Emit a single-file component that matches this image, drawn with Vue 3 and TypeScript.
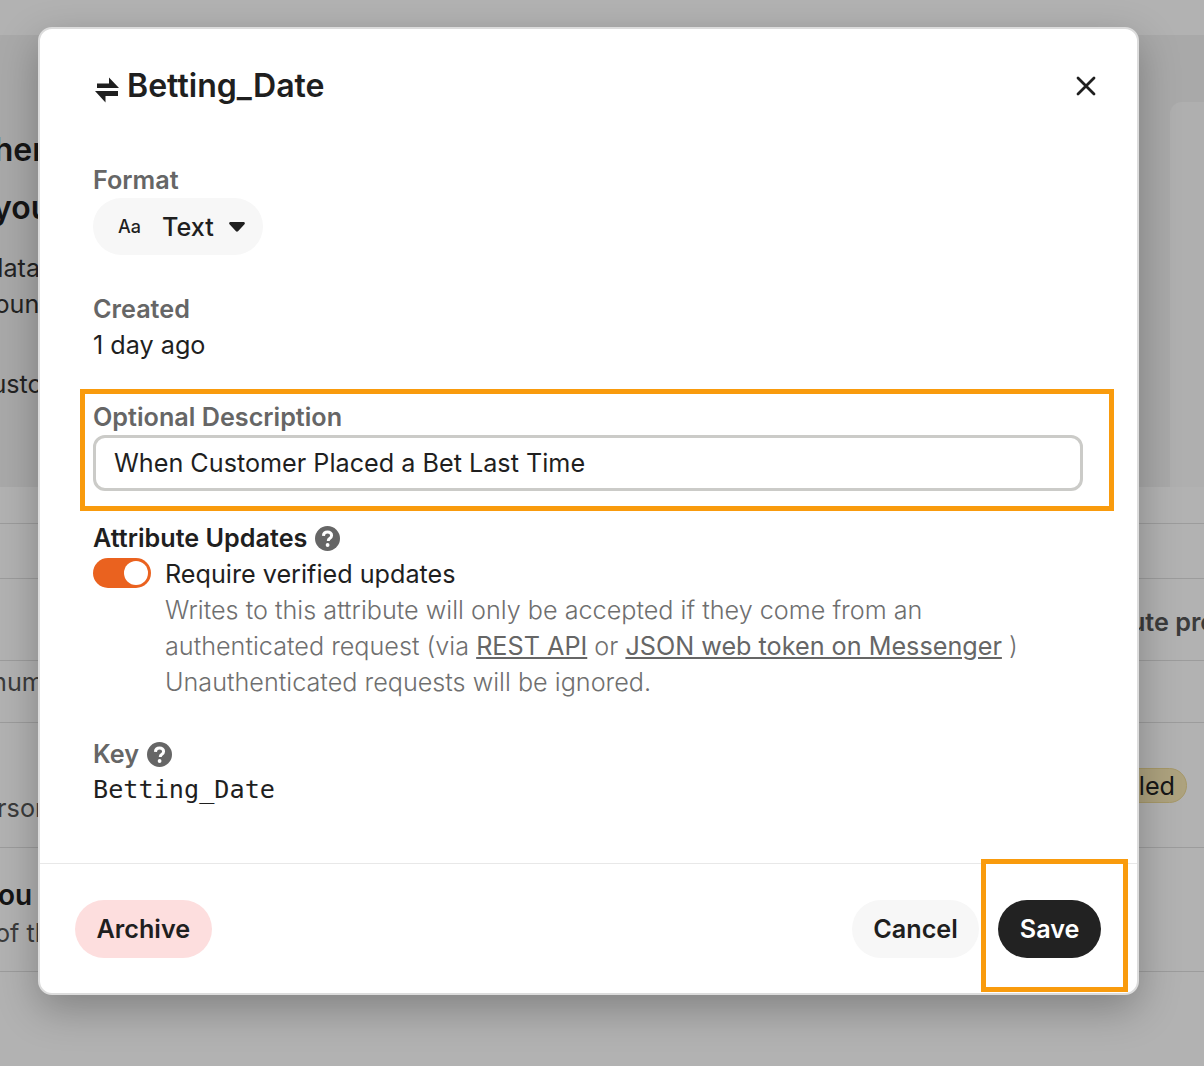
<script setup lang="ts">
const description = 'When Customer Placed a Bet Last Time'
</script>

<template>
  <div class="page">
    <div class="top-band"></div>
    <section class="hero">
      <div class="hero-copy">
        <div class="hero-title t1">Where</div>
        <div class="hero-title t2">your</div>
        <div class="hero-text first">data</div>
        <div class="hero-text second">bound</div>
        <div class="hero-text gap">custom</div>
      </div>
      <div class="hero-panel"></div>
    </section>
    <div class="row r1"></div>
    <div class="row r2"></div>
    <div class="row r3"><span class="right-strong">Attribute properties</span></div>
    <div class="row r4"><span class="lead">number</span></div>
    <div class="row r5">
      <span class="lead">person</span>
      <span class="badge">Enabled</span>
    </div>
    <div class="row r6">
      <span class="lead strong">you</span>
      <span class="lead">of the</span>
    </div>

    <div class="overlay"></div>

    <div class="modal">
      <header class="modal-head">
        <h2 class="title">
          <svg class="swap" width="26" height="28" viewBox="0 0 26 28" aria-hidden="true">
            <path d="M3 8.500h12V2.500L25 13H3z" fill="#1f1f1f" />
            <path d="M1 16h23v5H11.500v6.500L1 16z" fill="#1f1f1f" />
          </svg>
          <span>Betting_Date</span>
        </h2>
        <button class="close" aria-label="Close">
          <svg width="20" height="20" viewBox="0 0 20 20">
            <path d="M2 2l16 16M18 2L2 18" stroke="#1f1f1f" stroke-width="2.800" stroke-linecap="round" />
          </svg>
        </button>
      </header>

      <div class="modal-body">
        <div class="label">Format</div>
        <button class="format">
          <span class="aa">Aa</span>
          <span>Text</span>
          <svg width="16" height="10" viewBox="0 0 16 10">
            <path d="M1.500 0h13c1.200 0 1.800 1.300 1 2.200L9 9.300c-.6.600-1.500.600-2 0L.5 2.200C-.3 1.300.3 0 1.500 0z" fill="#1f1f1f" />
          </svg>
        </button>

        <div class="label section">Created</div>
        <div class="value">1 day ago</div>

        <div class="label section">Optional Description</div>
        <input class="input" :value="description" />

        <div class="label-dark">
          Attribute Updates
          <svg class="help" width="25" height="25" viewBox="0 0 25 25">
            <circle cx="12.500" cy="12.500" r="12.500" fill="#666" />
            <path d="M8.400 9.800c.2-2.400 2-3.700 4.200-3.700s4 1.300 4 3.400c0 1.600-1 2.400-2 3.100-.9.600-1.300 1.100-1.300 2.100v.4" fill="none" stroke="#fff" stroke-width="3" />
            <circle cx="12.600" cy="19" r="1.900" fill="#fff" />
          </svg>
        </div>
        <div class="toggle-row">
          <span class="toggle"><span class="knob"></span></span>
          <div class="toggle-copy">
            <div class="value">Require verified updates</div>
            <p class="desc">
              Writes to this attribute will only be accepted if they come from an<br />
              authenticated request (via <a>REST API</a> or <a>JSON web token on Messenger</a> )<br />
              Unauthenticated requests will be ignored.
            </p>
          </div>
        </div>

        <div class="label section">
          Key
          <svg class="help" width="25" height="25" viewBox="0 0 25 25">
            <circle cx="12.500" cy="12.500" r="12.500" fill="#666" />
            <path d="M8.400 9.800c.2-2.400 2-3.700 4.200-3.700s4 1.300 4 3.400c0 1.600-1 2.400-2 3.100-.9.600-1.300 1.100-1.300 2.100v.4" fill="none" stroke="#fff" stroke-width="3" />
            <circle cx="12.600" cy="19" r="1.900" fill="#fff" />
          </svg>
        </div>
        <div class="mono">Betting_Date</div>
      </div>

      <footer class="modal-foot">
        <button class="btn archive">Archive</button>
        <div class="foot-right">
          <button class="btn cancel">Cancel</button>
          <button class="btn save">Save</button>
        </div>
      </footer>
    </div>

    <div class="mark mark-desc"></div>
    <div class="mark mark-save"></div>
  </div>
</template>

<style>
html, body { margin: 0; padding: 0; }
</style>

<style scoped>
.page {
  position: relative;
  width: 1204px;
  height: 1066px;
  overflow: hidden;
  background: #fff;
  font-family: Inter, "Liberation Sans", sans-serif;
  font-size: 25.2px;
  line-height: 36px;
  color: #1f1f1f;
}
.top-band { height: 35px; }
.hero {
  height: 452px;
  display: flex;
  justify-content: space-between;
  align-items: flex-end;
  background: #f3f3f3;
}
.hero-copy { padding-top: 86px; align-self: flex-start; }
.hero-title {
  font-size: 32px;
  line-height: 58px;
  font-weight: 600;
  white-space: nowrap;
}
.t1 { margin-left: -39px; }
.t2 { margin-left: -7px; }
.hero-text { white-space: nowrap; color: #333; }
.hero-text.first { margin-top: 13px; margin-left: -12px; }
.hero-text.second { margin-left: -21px; }
.hero-text.gap { margin-top: 44px; margin-left: -23px; }
.hero-panel {
  width: 34px;
  height: 385px;
  background: #fbfbfb;
  border-radius: 12px 0 0 0;
}
.row {
  display: flex;
  flex-direction: column;
  justify-content: center;
  position: relative;
  border-top: 1px solid #e0e0e0;
  box-sizing: border-box;
  white-space: nowrap;
}
.r1 { height: 36px; border-top: 0; }
.r2 { height: 55px; }
.r3 { height: 82px; align-items: flex-end; padding-top: 4px; }
.r4 { height: 62px; justify-content: flex-start; padding-top: 3px; }
.r5 { height: 125px; justify-content: flex-end; padding-bottom: 21px; }
.r6 { height: 125px; border-bottom: 1px solid #e0e0e0; justify-content: flex-start; padding-top: 28px; }
.lead { color: #555; }
.r4 .lead { margin-left: -8px; }
.r5 .lead { margin-left: -33px; }
.r6 .lead.strong { font-weight: 600; color: #1f1f1f; font-size: 28px; margin-left: -18px; line-height: 38px; }
.r6 .lead:last-child { margin-top: 1px; margin-left: -5px; }
.right-strong {
  font-weight: 600;
  color: #555;
  margin-right: -97px;
}
.badge {
  position: absolute;
  right: 17px;
  top: 45px;
  height: 35px;
  line-height: 35px;
  padding: 0 11px 0 15px;
  border-radius: 18px;
  background: #f8e9b5;
  border: 1px solid #eeda96;
  box-sizing: border-box;
  color: #222;
}
.overlay {
  position: absolute;
  inset: 0;
  background: rgba(0, 0, 0, 0.3);
}
.modal {
  position: absolute;
  left: 38px;
  top: 27px;
  width: 1101px;
  height: 968px;
  box-sizing: border-box;
  display: flex;
  flex-direction: column;
  background: #fff;
  border: 2px solid #dcdcdc;
  border-radius: 14px;
  box-shadow: 0 14px 40px rgba(0, 0, 0, 0.27);
}
.modal-head {
  height: 133px;
  flex: none;
  box-sizing: border-box;
  padding: 39px 33px 0 53px;
  display: flex;
  justify-content: space-between;
  align-items: flex-start;
}
.title {
  margin: 0;
  display: flex;
  align-items: center;
  gap: 7px;
  font-size: 32.100px;
  line-height: 36px;
  font-weight: 600;
}
.swap { margin-top: 6px; margin-left: 1px; }
.close {
  width: 36px;
  height: 36px;
  border: 0;
  padding: 0;
  background: none;
  display: flex;
  align-items: center;
  justify-content: center;
}
.modal-body {
  flex: 1;
  padding: 0 54px 0 53px;
  display: flex;
  flex-direction: column;
  align-items: stretch;
}
.label, .label-dark {
  font-weight: 600;
  color: #666;
  display: flex;
  align-items: center;
  gap: 8px;
}
.label-dark {
  color: #1f1f1f;
  margin-top: 29px;
}
.section { margin-top: 36px; }
.format {
  align-self: flex-start;
  width: 170px;
  height: 57px;
  border: 0;
  border-radius: 29px;
  background: #f7f7f7;
  font: inherit;
  font-weight: 500;
  color: #1f1f1f;
  display: flex;
  align-items: center;
  padding: 0 0 0 25px;
}
.aa { font-size: 18px; width: 44px; text-align: left; padding-top: 1px; }
.format svg { margin-left: 15px; }
.value { color: #1f1f1f; }
.input {
  display: block;
  height: 56px;
  box-sizing: border-box;
  border: 3px solid #cbcbc8;
  border-radius: 12px;
  padding: 0 18px;
  font: inherit;
  color: #1f1f1f;
  background: #fff;
  outline: none;
}
.toggle-row { display: flex; gap: 14px; align-items: flex-start; }
.toggle {
  flex: none;
  width: 58px;
  height: 30px;
  margin-top: 2px;
  border-radius: 15px;
  background: #ea621f;
  position: relative;
}
.knob {
  position: absolute;
  right: 3px;
  top: 3px;
  width: 24px;
  height: 24px;
  border-radius: 50%;
  background: #fff;
}
.desc { margin: 0; color: #6f6f6f; font-weight: 300; white-space: nowrap; }
.desc a { color: #666; font-weight: 400; text-decoration: underline; }
.mono {
  font-family: "DejaVu Sans Mono", monospace;
  font-size: 25.200px;
  color: #1f1f1f;
}
.modal-foot {
  flex: none;
  height: 130px;
  box-sizing: border-box;
  border-top: 1px solid #e8e8e8;
  padding: 36px 36px 0 35px;
  display: flex;
  justify-content: space-between;
  align-items: flex-start;
}
.foot-right { display: flex; gap: 19px; }
.btn {
  height: 58px;
  border: 0;
  border-radius: 29px;
  padding: 0 21.500px;
  font: inherit;
  font-weight: 600;
  color: #1f1f1f;
}
.archive { background: #fddede; }
.cancel { background: #f7f7f7; }
.save { background: #222; color: #fff; }
.mark {
  position: absolute;
  box-sizing: border-box;
  border: 5px solid #f99b0d;
}
.mark-desc { left: 80px; top: 389px; width: 1034px; height: 122px; }
.mark-save { left: 981px; top: 859px; width: 147px; height: 133px; }
</style>
